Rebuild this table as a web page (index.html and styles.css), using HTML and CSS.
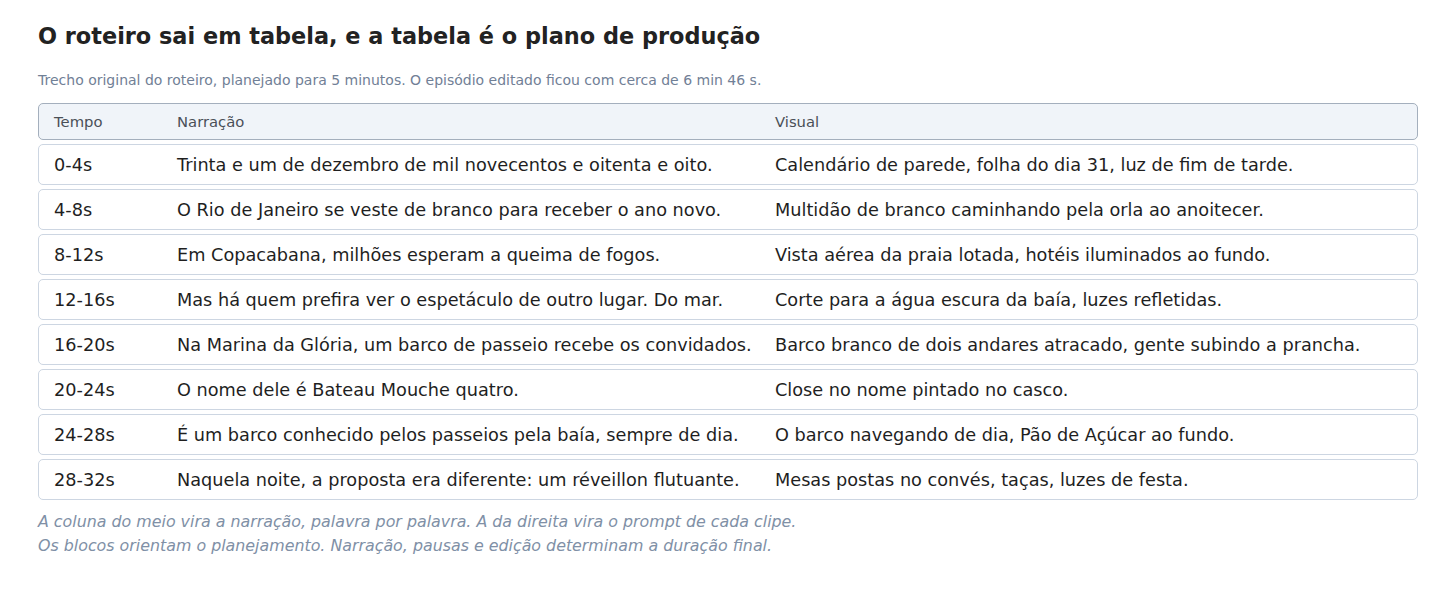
FILE: index.html
```html
<!DOCTYPE html>
<html lang="pt-BR">
<head>
    <meta charset="UTF-8">
    <meta name="viewport" content="width=device-width, initial-scale=1.0">
    <title>Roteiro em tabela</title>
    <link rel="stylesheet" href="styles.css">
</head>
<body>
    <div class="page">
        <h1>O roteiro sai em tabela, e a tabela é o plano de produção</h1>
        <p class="lead">Trecho original do roteiro, planejado para 5 minutos. O episódio editado ficou com cerca de 6 min 46 s.</p>

        <div class="script-table">
            <div class="row head">
                <span>Tempo</span>
                <span>Narração</span>
                <span>Visual</span>
            </div>
            <div class="row">
                <span>0-4s</span>
                <span>Trinta e um de dezembro de mil novecentos e oitenta e oito.</span>
                <span>Calendário de parede, folha do dia 31, luz de fim de tarde.</span>
            </div>
            <div class="row">
                <span>4-8s</span>
                <span>O Rio de Janeiro se veste de branco para receber o ano novo.</span>
                <span>Multidão de branco caminhando pela orla ao anoitecer.</span>
            </div>
            <div class="row">
                <span>8-12s</span>
                <span>Em Copacabana, milhões esperam a queima de fogos.</span>
                <span>Vista aérea da praia lotada, hotéis iluminados ao fundo.</span>
            </div>
            <div class="row">
                <span>12-16s</span>
                <span>Mas há quem prefira ver o espetáculo de outro lugar. Do mar.</span>
                <span>Corte para a água escura da baía, luzes refletidas.</span>
            </div>
            <div class="row">
                <span>16-20s</span>
                <span>Na Marina da Glória, um barco de passeio recebe os convidados.</span>
                <span>Barco branco de dois andares atracado, gente subindo a prancha.</span>
            </div>
            <div class="row">
                <span>20-24s</span>
                <span>O nome dele é Bateau Mouche quatro.</span>
                <span>Close no nome pintado no casco.</span>
            </div>
            <div class="row">
                <span>24-28s</span>
                <span>É um barco conhecido pelos passeios pela baía, sempre de dia.</span>
                <span>O barco navegando de dia, Pão de Açúcar ao fundo.</span>
            </div>
            <div class="row">
                <span>28-32s</span>
                <span>Naquela noite, a proposta era diferente: um réveillon flutuante.</span>
                <span>Mesas postas no convés, taças, luzes de festa.</span>
            </div>
        </div>

        <p class="note">A coluna do meio vira a narração, palavra por palavra. A da direita vira o prompt de cada clipe.<br>Os blocos orientam o planejamento. Narração, pausas e edição determinam a duração final.</p>
    </div>
</body>
</html>
```

FILE: styles.css
```css
body {
    margin: 0;
    padding: 0;
    background-color: #fff;
    font-family: "DejaVu Sans", Verdana, sans-serif;
    color: #1f1f1f;
}

.page {
    padding: 21px 38px 0 38px;
}

h1 {
    margin: 0;
    font-size: 22.4px;
    line-height: 30px;
    font-weight: bold;
    color: #222;
}

.lead {
    margin: 20px 0 14px 0;
    font-size: 14px;
    line-height: 18px;
    color: #718096;
}

.script-table {
    display: flex;
    flex-direction: column;
    gap: 4px;
}

.row {
    display: grid;
    grid-template-columns: 123px 598px 1fr;
    align-items: center;
    height: 41px;
    box-sizing: border-box;
    padding: 0 15px;
    border: 1px solid #cdd6e2;
    border-radius: 5px;
    font-size: 17.7px;
    color: #1f1f1f;
    white-space: nowrap;
}

.row.head {
    height: 37px;
    background-color: #f0f4f9;
    border-color: #a4afbd;
    font-size: 14.8px;
    color: #4a4f57;
}

.note {
    margin: 10px 0 0 0;
    font-size: 15.85px;
    line-height: 24px;
    font-style: italic;
    color: #8090a6;
}
```
